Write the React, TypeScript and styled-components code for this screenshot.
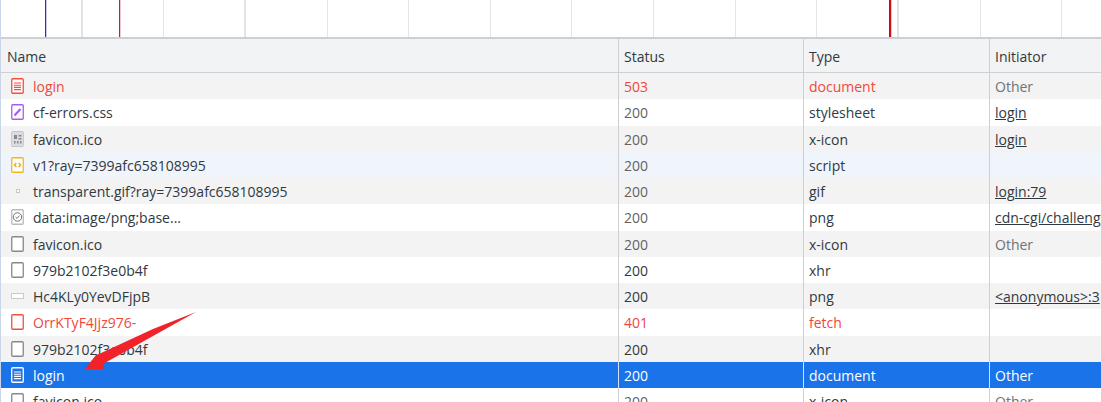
import { createGlobalStyle } from "styled-components";
import styled from "styled-components";

const GlobalStyle = createGlobalStyle`
  html, body {
    margin: 0;
    padding: 0;
    background: #fff;
    overflow: hidden;
  }
`

const Page = styled.div`
  position: relative;
  width: 1101px;
  height: 402px;
  overflow: hidden;
  font-family: "Open Sans", "Noto Sans", sans-serif;
  font-size: 14px;
  color: #303942;
  border-left: 1px solid #c9d6e8;
  box-sizing: border-box;
`

const Overview = styled.div`
  position: relative;
  display: flex;
  height: 37px;
  border-bottom: 2px solid #cdcfd3;
`

const Tick = styled.div<{ $wide?: boolean }>`
  flex: 0 0 81.65px;
  box-sizing: border-box;
  border-right: ${(p) => (p.$wide ? "2px" : "1px")} solid #e4e4e4;
`

const Marker = styled.div<{ $left: number; $color: string; $tint: string }>`
  position: absolute;
  top: 0;
  bottom: 0;
  left: ${(p) => p.$left}px;
  width: 1px;
  background: ${(p) => p.$color};
  box-shadow: 1px 0 0 ${(p) => p.$tint};
`

const Row = styled.div<{ $bg?: string; $fg?: string }>`
  display: grid;
  grid-template-columns: 617px 185px 186px 1fr;
  height: 26.25px;
  background: ${(p) => p.$bg ?? "#fff"};
  color: ${(p) => p.$fg ?? "#303942"};
`

const Header = styled(Row)`
  height: 33px;
  background: #f1f3f4;
  border-bottom: 1px solid #cdcfd3;
  color: #303942;
`

const Cell = styled.div<{ $sep?: string; $fg?: string; $line?: boolean }>`
  display: flex;
  align-items: center;
  gap: 8px;
  padding: 1px 0 0 ${(p) => (p.$sep ? "5px" : "6px")};
  box-sizing: border-box;
  overflow: hidden;
  white-space: nowrap;
  border-left: ${(p) => (p.$sep ? `1px solid ${p.$sep}` : "none")};
  color: ${(p) => p.$fg ?? "inherit"};
  text-decoration: ${(p) => (p.$line ? "underline" : "none")};
`

const NameCell = styled(Cell)`
  padding-left: 10px;
`

const IconBox = styled.svg`
  flex: 0 0 14px;
  width: 14px;
  height: 16px;
  margin-top: -1px;
`

const Arrow = styled.svg`
  position: absolute;
  left: -1px;
  top: 0;
  pointer-events: none;
`

type Kind = "docErr" | "css" | "ico" | "js" | "dot" | "check" | "blank" | "blankErr" | "bar" | "docSel";

function FileIcon({ kind }: { kind: Kind }) {
  if (kind === "dot") {
    return (
      <IconBox viewBox="0 0 14 16">
        <rect x="5.5" y="6.5" width="3" height="3" fill="#fff" stroke="#c4c8cc" />
      </IconBox>
    );
  }
  if (kind === "bar") {
    return (
      <IconBox viewBox="0 0 14 16">
        <rect x="0.5" y="5.5" width="12" height="5" fill="#fff" stroke="#c6c8cb" />
      </IconBox>
    );
  }
  const stroke = {
    docErr: "#f1503f",
    css: "#a55cf5",
    ico: "#c4c6c9",
    js: "#f5b41e",
    check: "#b8bbc0",
    blank: "#85888c",
    blankErr: "#f1503f",
    docSel: "#ffffff",
  }[kind];
  return (
    <IconBox viewBox="0 0 14 16">
      <rect x="0.75" y="0.75" width="11.5" height="14.5" rx="1" fill={kind === "docSel" ? "none" : "#fff"} stroke={stroke} strokeWidth="1.3" />
      {(kind === "docErr" || kind === "docSel") && (
        <path d="M3 5h7M3 7.2h7M3 9.4h7M3 11.6h7" stroke={stroke} strokeWidth="1.1" />
      )}
      {kind === "css" && <path d="M3.5 11.5 L9.5 5" stroke={stroke} strokeWidth="2.2" />}
      {kind === "ico" && (
        <>
          <rect x="1" y="1" width="11" height="14" fill="#dcdde0" />
          <path d="M3 4h3v4H3zM7.5 4h3v1.5h-3zM7.5 7h3v1.5h-3zM3 10h1.5v2.5H3zM6 10h1.5v2.5H6zM9 10h1.5v2.5H9z" fill="#85888c" />
        </>
      )}
      {kind === "js" && <path d="M5.4 6 L3.4 8 L5.4 10 M7.6 6 L9.6 8 L7.6 10" fill="none" stroke="#e8a70c" strokeWidth="1.3" />}
      {kind === "check" && (
        <>
          <circle cx="6.5" cy="8" r="4.2" fill="none" stroke="#6f7276" strokeWidth="1" />
          <path d="M4.6 8 L6 9.4 L8.5 6.6" fill="none" stroke="#6f7276" strokeWidth="1" />
        </>
      )}
    </IconBox>
  );
}

interface RequestRow {
  name: string;
  status: string;
  type: string;
  initiator?: string;
  link?: boolean;
  dim?: boolean;
  dimStatus?: boolean;
  icon: Kind;
  bg: string;
  tone?: "error" | "selected";
}

const GRAY = "#f3f3f3";
const RED = "#f0483a";

const rows: RequestRow[] = [
  { name: "login", status: "503", type: "document", initiator: "Other", dim: true, icon: "docErr", bg: GRAY, tone: "error" },
  { name: "cf-errors.css", status: "200", dimStatus: true, type: "stylesheet", initiator: "login", link: true, icon: "css", bg: "#fff" },
  { name: "favicon.ico", status: "200", dimStatus: true, type: "x-icon", initiator: "login", link: true, icon: "ico", bg: GRAY },
  { name: "v1?ray=7399afc658108995", status: "200", dimStatus: true, type: "script", icon: "js", bg: "#f0f4fb" },
  { name: "transparent.gif?ray=7399afc658108995", status: "200", dimStatus: true, type: "gif", initiator: "login:79", link: true, icon: "dot", bg: GRAY },
  { name: "data:image/png;base...", status: "200", dimStatus: true, type: "png", initiator: "cdn-cgi/challenge-platform", link: true, icon: "check", bg: "#fff" },
  { name: "favicon.ico", status: "200", dimStatus: true, type: "x-icon", initiator: "Other", dim: true, icon: "blank", bg: GRAY },
  { name: "979b2102f3e0b4f", status: "200", type: "xhr", icon: "blank", bg: "#fff" },
  { name: "Hc4KLy0YevDFjpB", status: "200", type: "png", initiator: "<anonymous>:3", link: true, icon: "bar", bg: GRAY },
  { name: "OrrKTyF4Jjz976-", status: "401", type: "fetch", icon: "blankErr", bg: "#fff", tone: "error" },
  { name: "979b2102f3e0b4f", status: "200", type: "xhr", icon: "blank", bg: GRAY },
  { name: "login", status: "200", type: "document", initiator: "Other", icon: "docSel", bg: "#1a73e8", tone: "selected" },
  { name: "favicon.ico", status: "200", dimStatus: true, type: "x-icon", initiator: "Other", dim: true, icon: "blank", bg: "#fff" },
];

const ticks = Array.from({ length: 14 }, (_, i) => i);

function App() {
  return (
    <Page>
      <GlobalStyle />
      <Overview>
        {ticks.map((i) => (
          <Tick key={i} $wide={i === 0 || i === 2 || i === 10} />
        ))}
        <Marker $left={44} $color="#2f2fc4" $tint="#c9c9ee" />
        <Marker $left={118} $color="#c0203a" $tint="#f0c8ce" />
        <Marker $left={888} $color="#2f2fc4" $tint="transparent" />
        <Marker $left={889} $color="#d0101c" $tint="#f4c4c8" />
      </Overview>
      <Header>
        <Cell>Name</Cell>
        <Cell $sep="#cdcfd3">Status</Cell>
        <Cell $sep="#cdcfd3">Type</Cell>
        <Cell $sep="#cdcfd3">Initiator</Cell>
      </Header>
      {rows.map((r, i) => {
        const selected = r.tone === "selected";
        const fg = r.tone === "error" ? RED : selected ? "#fff" : undefined;
        const sep = selected ? "#d5e3fa" : "#cdcfd3";
        return (
          <Row key={i} $bg={r.bg} $fg={fg}>
            <NameCell>
              <FileIcon kind={r.icon} />
              {r.name}
            </NameCell>
            <Cell $sep={sep} $fg={fg ?? (r.dimStatus ? "#5f6368" : undefined)}>{r.status}</Cell>
            <Cell $sep={sep}>{r.type}</Cell>
            <Cell $sep={sep} $line={r.link} $fg={r.dim ? "#6f7276" : undefined}>{r.initiator}</Cell>
          </Row>
        );
      })}
      <Arrow width="1101" height="402" viewBox="0 0 1101 402">
        <path d="M196 312 L153 336 L103 364 L104 369 L85 369 L96 355 L99 354 L153 329 Z" fill="#f0232b" />
      </Arrow>
    </Page>
  );
}

export default App;
